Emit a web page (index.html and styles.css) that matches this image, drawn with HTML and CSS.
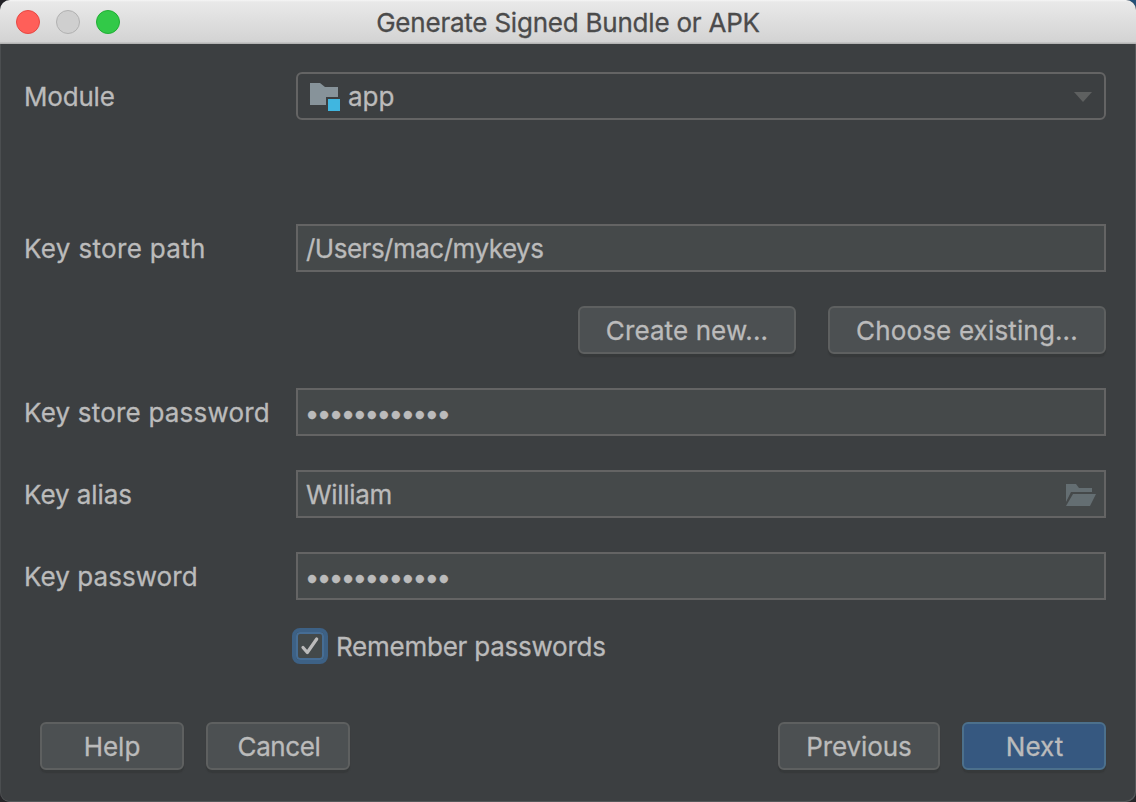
FILE: index.html
```html
<!DOCTYPE html>
<html lang="en">
<head>
<meta charset="utf-8">
<title>Generate Signed Bundle or APK</title>
<link rel="stylesheet" href="styles.css">
</head>
<body>
<div class="window">
  <header class="titlebar">
    <div class="lights"><i class="light close"></i><i class="light minimize"></i><i class="light zoom"></i></div>
    <h1 class="title"><span class="t-title">Generate Signed Bundle or APK</span></h1>
  </header>
  <main class="content">
    <div class="row module">
      <label><span class="t-module">Module</span></label>
      <div class="select">
        <svg class="folder" width="32" height="28" viewBox="0 0 32 28"><path d="M0 0H10L15 4H28V14H16V22H0Z" fill="#87939a"/><path d="M18 16H30V28H18Z" fill="#40b6e0"/></svg>
        <span class="t-app">app</span>
        <svg class="arrow" width="18" height="10" viewBox="0 0 18 10"><path d="M0 0H18L9 10Z" fill="#5e6060"/></svg>
      </div>
    </div>
    <div class="row">
      <label><span class="t-path">Key store path</span></label>
      <div class="field"><span class="t-value">/Users/mac/mykeys</span></div>
    </div>
    <div class="store-actions">
      <button class="button create"><span class="t-create">Create new...</span></button>
      <button class="button choose"><span class="t-choose">Choose existing...</span></button>
    </div>
    <div class="row">
      <label><span class="t-storepw">Key store password</span></label>
      <div class="field"><span class="dots">••••••••••••</span></div>
    </div>
    <div class="row">
      <label><span class="t-alias">Key alias</span></label>
      <div class="field"><span class="t-william">William</span>
        <svg class="open" width="30" height="22" viewBox="0 0 30 22"><path d="M0 0H10L13 4H26V8H5L0 18Z" fill="#646e72"/><path d="M7 10H30L24 22H0Z" fill="#646e72"/></svg>
      </div>
    </div>
    <div class="row">
      <label><span class="t-keypw">Key password</span></label>
      <div class="field"><span class="dots">••••••••••••</span></div>
    </div>
    <div class="remember">
      <span class="checkbox"><svg width="24" height="24" viewBox="0 0 24 24"><path d="M5 13.500L9.300 18.500L18.700 5" fill="none" stroke="#bbb" stroke-width="3.200" stroke-linecap="round" stroke-linejoin="round"/></svg></span>
      <span class="t-remember">Remember passwords</span>
    </div>
  </main>
  <footer class="footer">
    <button class="button small"><span class="t-help">Help</span></button>
    <button class="button small"><span class="t-cancel">Cancel</span></button>
    <button class="button previous"><span class="t-previous">Previous</span></button>
    <button class="button small primary"><span class="t-next">Next</span></button>
  </footer>
</div>
</body>
</html>
```
FILE: styles.css
```css
* { box-sizing: border-box; }
body {
  margin: 0;
  width: 1136px;
  height: 802px;
  overflow: hidden;
  background: linear-gradient(90deg, #222126 50%, #245078 50%) top / 100% 20px no-repeat, #262528;
  font: 26px/30px Inter, "Liberation Sans", sans-serif;
  color: #bbb;
  -webkit-text-stroke: 0.3px;
}
span { white-space: nowrap; }
svg { display: block; }
.window {
  display: flex;
  flex-direction: column;
  height: 802px;
  border-radius: 10px;
  overflow: hidden;
  background: #3c3f41;
  box-shadow: inset -1px -1px #55585a, inset 1px 0 #4b4e50;
}
.titlebar {
  display: grid;
  grid-template-columns: 120px 1fr 120px;
  align-items: center;
  height: 44px;
  padding-bottom: 1px;
  background: linear-gradient(#f6f6f6 0, #e9e9e9 2px, #d3d3d3 42px, #b4b4b4 43px);
}
.lights { display: flex; gap: 16px; padding-left: 16px; }
.light { width: 24px; height: 24px; border-radius: 50%; border: 1px solid; flex: none; }
.close { background: #ff5f59; border-color: #e64843; }
.minimize { background: #cfcfcf; border-color: #b1b1b1; }
.zoom { background: #32c948; border-color: #20ae34; }
.title { margin: 0; padding-top: 3px; font: inherit; color: #4b4b4b; text-align: center; }
.content { display: flex; flex-direction: column; gap: 34px; padding: 28px 30px 0 24px; }
.row { display: grid; grid-template-columns: 272px 1fr; height: 48px; align-items: center; }
.module { margin-bottom: 70px; }
.row label { padding-top: 2px; }
.select, .field { display: flex; align-items: center; height: 48px; border: 2px solid #646464; }
.select { border-radius: 6px; padding: 2px 12px 0 12px; }
.folder { margin-right: 6px; }
.arrow, .open { margin-left: auto; }
.field { background: #45494a; padding: 2px 8px 0; }
.dots { font-size: 26px; letter-spacing: -2.65px; margin-left: -1.3px; padding-top: 1px; }
.store-actions { display: flex; justify-content: flex-end; gap: 32px; }
.button {
  display: flex;
  align-items: center;
  justify-content: center;
  height: 48px;
  padding: 2px 0 0;
  border: 2px solid #5e6060;
  border-radius: 6px;
  background: #4c5052;
  box-shadow: 0 3px 1px #36393a;
  font: inherit;
  color: inherit;
}
.create { width: 218px; }
.choose { width: 278px; }
.small { width: 144px; }
.previous { width: 162px; margin-left: auto; }
.primary { background: #365880; border-color: #4c708c; }
.remember { display: flex; align-items: center; gap: 8px; margin: -6px 0 0 268px; height: 36px; }
.checkbox { display: grid; place-items: center; width: 36px; height: 36px; border: 4px solid #3d6185; border-radius: 8px; background: #43494a; box-shadow: inset 0 0 0 2px #466d94; }
.t-remember { padding-top: 2px; }
.footer { display: flex; gap: 22px; padding: 58px 30px 0 40px; }

/* Per-label tracking */
.t-title { letter-spacing: -0.22px; }
.t-module { letter-spacing: -0.2px; }
.t-path { letter-spacing: 0.34px; }
.t-value { letter-spacing: -0.5px; }
.t-create { letter-spacing: 0.1px; }
.t-choose { letter-spacing: 0.15px; }
.t-storepw { letter-spacing: 0.2px; }
.t-alias { letter-spacing: -0.06px; }
.t-william { letter-spacing: -0.3px; }
.t-keypw { letter-spacing: 0.06px; }
.t-remember { letter-spacing: -0.24px; }
.t-cancel { letter-spacing: -0.4px; padding-left: 2px; }
.t-previous { letter-spacing: -0.1px; }
.t-next { padding-left: 1px; }
```
